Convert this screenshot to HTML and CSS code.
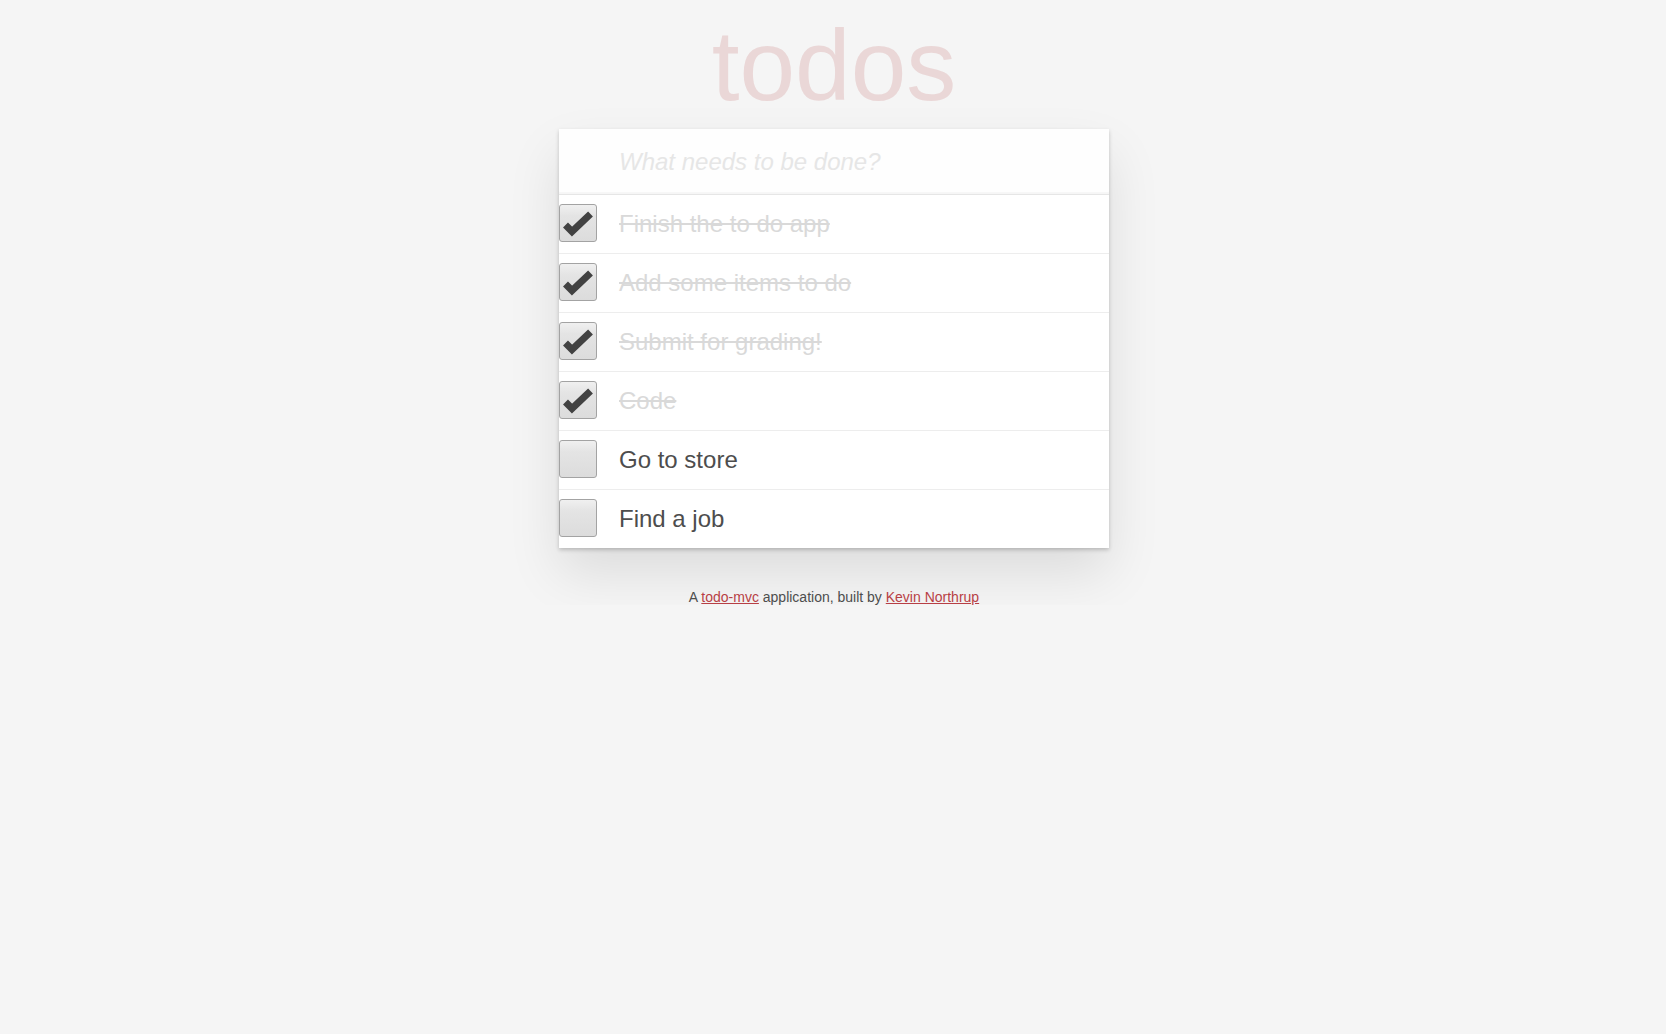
FILE: index.html
```html
<!DOCTYPE html>
<html lang="en">
<head>
<meta charset="utf-8">
<title>todos</title>
<link rel="stylesheet" href="styles.css">
</head>
<body>
<h1 class="title">todos</h1>
<section class="todoapp">
  <input class="new-todo" type="text" placeholder="What needs to be done?">
  <ul class="todo-list">
    <li class="todo done">
      <span class="box"><svg viewBox="0 0 38 38" width="38" height="38"><polyline points="6.5,21 13,27.5 31.5,10" fill="none" stroke="#424242" stroke-width="7"/></svg></span>
      <span class="label">Finish the to do app</span>
    </li>
    <li class="todo done">
      <span class="box"><svg viewBox="0 0 38 38" width="38" height="38"><polyline points="6.5,21 13,27.5 31.5,10" fill="none" stroke="#424242" stroke-width="7"/></svg></span>
      <span class="label">Add some items to do</span>
    </li>
    <li class="todo done">
      <span class="box"><svg viewBox="0 0 38 38" width="38" height="38"><polyline points="6.5,21 13,27.5 31.5,10" fill="none" stroke="#424242" stroke-width="7"/></svg></span>
      <span class="label">Submit for grading!</span>
    </li>
    <li class="todo done">
      <span class="box"><svg viewBox="0 0 38 38" width="38" height="38"><polyline points="6.5,21 13,27.5 31.5,10" fill="none" stroke="#424242" stroke-width="7"/></svg></span>
      <span class="label">Code</span>
    </li>
    <li class="todo">
      <span class="box"></span>
      <span class="label">Go to store</span>
    </li>
    <li class="todo">
      <span class="box"></span>
      <span class="label">Find a job</span>
    </li>
  </ul>
</section>
<footer class="info">A <a href="#">todo-mvc</a> application, built by <a href="#">Kevin Northrup</a></footer>
</body>
</html>
```

FILE: styles.css
```css
html, body {
  margin: 0;
  padding: 0;
}
body {
  padding-left: 2px;
  background: #f5f5f5;
  font-family: "Liberation Sans", Arial, sans-serif;
  color: #4d4d4d;
}
.title {
  margin: 15px 0 14px;
  text-align: center;
  font-size: 100px;
  line-height: 100px;
  font-weight: 400;
  color: rgba(175, 47, 47, 0.15);
}
.todoapp {
  width: 550px;
  margin: 0 auto;
  background: #fff;
  box-shadow: 0 2px 4px rgba(0, 0, 0, 0.2), 0 25px 50px rgba(0, 0, 0, 0.1);
}
.new-todo {
  display: block;
  box-sizing: border-box;
  width: 100%;
  height: 65px;
  margin: 0;
  padding: 16px 16px 16px 60px;
  border: none;
  outline: none;
  background: rgba(0, 0, 0, 0.003);
  box-shadow: inset 0 -2px 1px rgba(0, 0, 0, 0.03);
  font-family: "Liberation Sans", Arial, sans-serif;
  font-size: 24px;
  line-height: 33px;
  color: #4d4d4d;
}
.new-todo::placeholder {
  font-style: italic;
  color: #e6e6e6;
}
.todo-list {
  list-style: none;
  margin: 0;
  padding: 0;
  border-top: 1px solid #e6e6e6;
}
.todo {
  display: flex;
  align-items: flex-start;
  border-bottom: 1px solid #ededed;
  font-size: 24px;
}
.todo:last-child {
  border-bottom: none;
}
.box {
  flex: none;
  box-sizing: border-box;
  width: 38px;
  height: 38px;
  margin-top: 9px;
  border: 1px solid #a3a3a3;
  border-radius: 3px;
  background: linear-gradient(#f0f0f0 0%, #e4e4e4 30%, #dcdcdc 100%);
  position: relative;
}
.box svg {
  position: absolute;
  left: -1px;
  top: -1px;
}
.label {
  padding: 15px 15px 15px 22px;
  line-height: 28px;
  color: #4d4d4d;
}
.done .label {
  color: #d9d9d9;
  text-decoration: line-through;
}
.info {
  margin-top: 41px;
  text-align: center;
  font-size: 14px;
  color: #4d4d4d;
}
.info a {
  color: #b83f45;
  text-decoration: underline;
}
```
